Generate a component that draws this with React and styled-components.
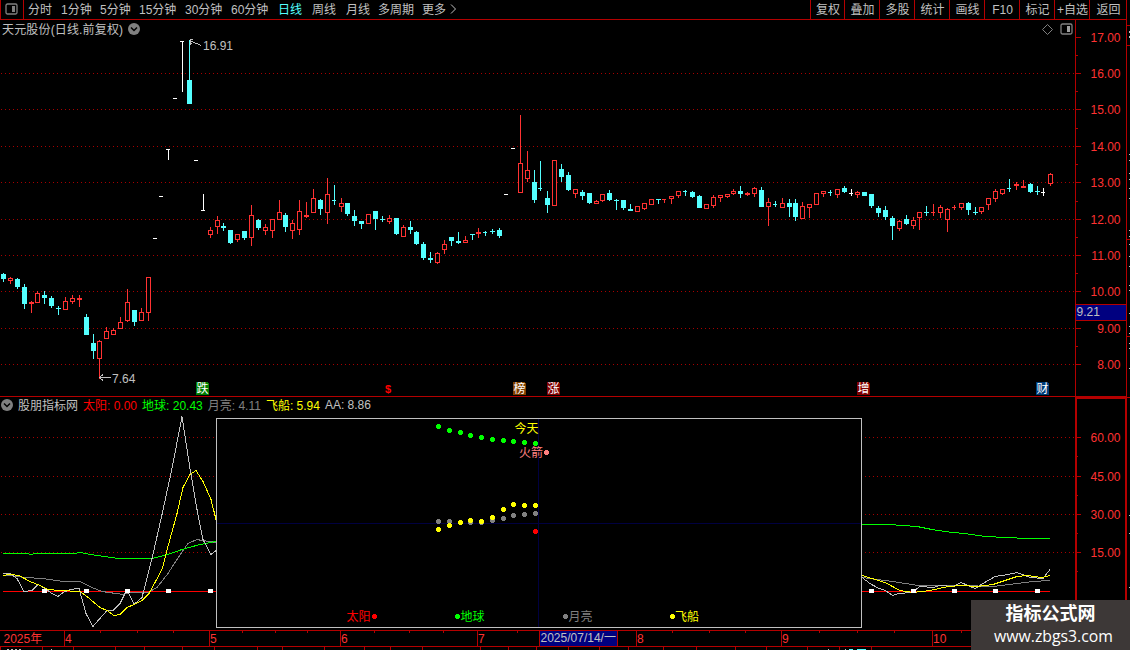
import styled, { createGlobalStyle } from "styled-components";

const periods = [
  { name: "分时", width: 33 },
  { name: "1分钟", width: 39 },
  { name: "5分钟", width: 39 },
  { name: "15分钟", width: 46 },
  { name: "30分钟", width: 46 },
  { name: "60分钟", width: 47 },
  { name: "日线", width: 34 },
  { name: "周线", width: 34 },
  { name: "月线", width: 32 },
  { name: "多周期", width: 44 },
  { name: "更多", width: 28 },
];

const tools = ["复权", "叠加", "多股", "统计", "画线", "F10", "标记", "+自选", "返回"];

// [x, high, top, bottom, low, kind]
// kind: d = down, u = up, f = up filled, c = cyan dash, r = red dash, w = white dash
const candles = [
  [3, 273, 274, 279, 282, "d"], [10, 277, 278, 281, 284, "u"], [17, 278, 279, 287, 289, "d"],
  [24, 284, 287, 304, 309, "d"], [31, 301, 302, 304, 313, "f"], [37, 291, 293, 303, 303, "u"],
  [44, 291, 295, 298, 304, "d"], [51, 296, 298, 306, 308, "d"], [58, 306, 308, 309, 315, "d"],
  [65, 297, 301, 310, 310, "u"], [72, 295, 298, 302, 304, "u"], [79, 295, 298, 300, 307, "f"],
  [86, 314, 317, 335, 335, "d"], [93, 334, 343, 351, 359, "d"], [99, 340, 341, 359, 379, "u"],
  [106, 327, 331, 339, 339, "u"], [113, 328, 330, 335, 335, "u"], [120, 317, 322, 329, 329, "u"],
  [127, 289, 302, 321, 322, "u"], [134, 310, 310, 322, 326, "d"], [141, 308, 312, 321, 321, "u"],
  [148, 277, 277, 313, 321, "u"], [155, 238, 238, 239, 239, "w"], [161, 196, 196, 197, 197, "w"],
  [168, 149, 149, 150, 160, "w"], [175, 98, 98, 99, 99, "w"], [182, 41, 41, 42, 92, "w"],
  [189, 40, 80, 104, 104, "d"], [196, 160, 160, 161, 161, "w"], [203, 194, 210, 211, 211, "w"],
  [210, 227, 230, 235, 238, "u"], [217, 216, 220, 227, 234, "u"], [223, 223, 226, 228, 231, "d"],
  [230, 230, 230, 243, 244, "d"], [237, 234, 234, 240, 242, "u"], [244, 231, 231, 238, 240, "d"],
  [251, 205, 215, 238, 246, "u"], [258, 219, 220, 228, 230, "d"], [265, 224, 227, 231, 235, "u"],
  [272, 219, 219, 231, 238, "u"], [279, 200, 212, 220, 220, "u"], [285, 213, 215, 227, 232, "d"],
  [292, 220, 223, 231, 239, "u"], [299, 200, 211, 230, 235, "u"], [306, 202, 215, 217, 218, "f"],
  [313, 189, 198, 213, 213, "u"], [320, 199, 200, 209, 215, "d"], [327, 178, 194, 213, 224, "u"],
  [334, 185, 200, 201, 205, "c"], [341, 198, 203, 207, 212, "u"], [347, 203, 203, 214, 216, "d"],
  [354, 210, 216, 221, 226, "d"], [361, 221, 221, 224, 229, "d"], [368, 214, 214, 224, 224, "u"],
  [375, 211, 211, 219, 230, "d"], [382, 216, 219, 220, 222, "d"], [389, 215, 218, 222, 224, "u"],
  [396, 218, 218, 234, 235, "d"], [403, 225, 227, 237, 237, "u"], [410, 221, 227, 230, 234, "d"],
  [416, 231, 232, 244, 245, "d"], [423, 242, 244, 258, 260, "d"], [430, 252, 258, 260, 263, "d"],
  [437, 252, 253, 263, 264, "u"], [444, 240, 244, 250, 254, "u"], [451, 237, 237, 241, 246, "d"],
  [458, 232, 241, 243, 244, "d"], [465, 236, 240, 243, 243, "u"], [472, 234, 234, 235, 240, "d"],
  [478, 228, 232, 234, 238, "f"], [485, 231, 232, 233, 236, "c"], [492, 229, 231, 232, 234, "d"],
  [499, 228, 230, 236, 238, "d"], [506, 194, 194, 195, 195, "w"], [513, 148, 148, 149, 149, "w"],
  [520, 115, 163, 193, 193, "u"], [527, 151, 170, 179, 182, "u"], [534, 170, 182, 200, 203, "d"],
  [540, 161, 188, 189, 191, "c"], [547, 191, 198, 205, 213, "d"], [554, 160, 160, 206, 206, "u"],
  [561, 164, 169, 177, 182, "d"], [568, 172, 175, 190, 191, "d"], [575, 189, 189, 194, 198, "u"],
  [582, 190, 192, 196, 200, "d"], [589, 193, 193, 203, 204, "d"], [596, 200, 201, 204, 204, "u"],
  [602, 194, 194, 201, 202, "u"], [609, 190, 193, 200, 201, "d"], [616, 199, 200, 201, 210, "d"],
  [623, 200, 200, 208, 210, "d"], [630, 204, 209, 211, 211, "d"], [637, 206, 206, 212, 212, "u"],
  [644, 203, 203, 209, 210, "u"], [651, 199, 199, 205, 205, "u"], [658, 199, 199, 200, 204, "d"],
  [664, 199, 199, 200, 203, "r"], [671, 196, 196, 199, 204, "u"], [678, 191, 191, 196, 198, "u"],
  [685, 190, 191, 192, 196, "c"], [692, 191, 192, 197, 198, "d"], [699, 195, 196, 208, 208, "d"],
  [706, 204, 204, 209, 209, "u"], [713, 195, 197, 206, 208, "u"], [720, 195, 195, 198, 202, "u"],
  [727, 194, 194, 197, 198, "u"], [733, 189, 191, 194, 195, "u"], [740, 186, 191, 194, 198, "d"],
  [747, 192, 193, 195, 196, "f"], [754, 187, 188, 194, 197, "u"], [761, 187, 190, 207, 207, "d"],
  [768, 198, 202, 207, 226, "u"], [775, 201, 204, 205, 207, "c"], [782, 198, 203, 208, 208, "u"],
  [789, 199, 203, 207, 217, "d"], [795, 199, 203, 217, 221, "d"], [802, 202, 206, 219, 219, "u"],
  [809, 204, 204, 208, 218, "u"], [816, 193, 193, 205, 205, "u"], [823, 191, 191, 194, 197, "u"],
  [830, 190, 192, 193, 196, "c"], [837, 189, 189, 195, 198, "u"], [844, 186, 188, 192, 193, "d"],
  [851, 189, 193, 194, 196, "w"], [857, 191, 192, 195, 198, "u"], [864, 192, 192, 196, 196, "d"],
  [871, 194, 194, 206, 208, "d"], [878, 206, 208, 213, 217, "d"], [885, 206, 210, 217, 220, "d"],
  [892, 216, 218, 226, 240, "d"], [899, 220, 221, 229, 231, "u"], [906, 215, 219, 224, 225, "d"],
  [913, 217, 220, 226, 229, "u"], [919, 212, 212, 218, 230, "u"], [926, 206, 212, 213, 216, "d"],
  [933, 204, 212, 213, 216, "r"], [940, 205, 207, 213, 218, "u"], [947, 208, 209, 220, 232, "u"],
  [954, 205, 207, 208, 210, "r"], [961, 203, 203, 208, 210, "u"], [968, 202, 203, 210, 215, "d"],
  [975, 207, 212, 213, 215, "d"], [981, 207, 207, 212, 214, "u"], [988, 198, 198, 205, 210, "u"],
  [995, 189, 191, 199, 202, "u"], [1002, 189, 189, 194, 195, "u"], [1009, 179, 188, 189, 192, "c"],
  [1016, 182, 184, 186, 190, "f"], [1023, 180, 186, 188, 188, "f"], [1030, 183, 184, 192, 193, "d"],
  [1037, 186, 191, 192, 195, "d"], [1043, 188, 192, 193, 196, "w"], [1050, 173, 174, 184, 186, "u"],
];

const colors = {
  d: "#54ffff",
  c: "#54ffff",
  u: "#ff3232",
  f: "#ff3232",
  r: "#ff3232",
  w: "#ffffff",
};

const priceTicks = [
  [37, "17.00"], [73, "16.00"], [109, "15.00"], [146, "14.00"], [182, "13.00"],
  [219, "12.00"], [255, "11.00"], [291, "10.00"], [328, "9.00"], [364, "8.00"],
];
const priceMinor = [55, 91, 128, 164, 201, 237, 273, 346];

const badges = [
  { x: 196, text: "跌", color: "#008000" },
  { x: 513, text: "榜", color: "#804000" },
  { x: 547, text: "涨", color: "#800000" },
  { x: 857, text: "增", color: "#800000" },
  { x: 1036, text: "财", color: "#003c78" },
];

const legend = [
  { text: "股朋指标网", color: "#c0c0c0" },
  { text: "太阳: 0.00", color: "#ff0000" },
  { text: "地球: 20.43", color: "#00ff00" },
  { text: "月亮: 4.11", color: "#808080" },
  { text: "飞船: 5.94", color: "#ffff00" },
  { text: "AA: 8.86", color: "#c0c0c0" },
];

const indicatorTicks = [[437, "60.00"], [476, "45.00"], [514, "30.00"], [552, "15.00"]];

const lines = [
  {
    color: "#808080",
    points: [
      "3,575 10,575 25,577 43,578 63,581 80,581 92,587 102,591 123,594 130,592 148,592 157,587 168,573 175,562 183,550 188,543 197,539 202,540 216,542",
      "862,577 877,579 893,581 918,585 937,585 962,585 993,586 1017,583 1033,581 1050,580",
    ],
  },
  {
    color: "#00ff00",
    points: [
      "3,553 27,553 31,554 36,553 74,553 81,552 90,554 98,555 118,558 152,558 160,556 168,554 182,549 200,544 216,541",
      "862,524 889,524 917,526 932,529 952,532 965,533 985,536 1007,537 1027,538 1050,538",
    ],
  },
  {
    color: "#c0c0c0",
    points: [
      "3,573 10,573 17,578 24,591 32,590 38,584 45,588 52,593 58,596 63,592 70,589 79,588 86,613 93,626 99,619 107,610 113,610 120,603 127,589 134,604 142,597 152,558 162,514 172,468 182,416 190,468 197,509 203,539 211,554 216,550",
      "862,577 870,583 877,587 885,590 893,595 898,593 912,592 920,586 933,587 940,585 953,586 961,582 975,588 983,583 995,576 1008,574 1017,572 1030,577 1043,578 1050,569",
    ],
  },
  {
    color: "#ffff00",
    points: [
      "3,575 10,574 19,575 30,581 40,585 48,589 60,590 80,591 87,596 100,607 107,610 114,615 120,614 127,607 134,604 142,600 149,593 162,569 168,546 177,513 183,487 190,474 196,470 203,481 211,499 216,519",
      "862,575 872,578 885,582 900,590 913,592 930,590 948,586 963,585 977,586 993,584 1005,580 1017,576 1027,575 1042,577 1050,575",
    ],
  },
];

const markers = [42, 84, 125, 166, 208, 869, 911, 952, 993, 1035];

const dots = [
  {
    color: "#00ff00",
    points: [[438, 426], [449, 430], [460, 432], [470, 435], [481, 437], [492, 439], [503, 440], [513, 441], [524, 442], [535, 443], [457, 616]],
  },
  {
    color: "#808080",
    points: [[438, 521], [449, 521], [460, 522], [470, 522], [481, 522], [492, 520], [503, 518], [513, 515], [524, 514], [535, 513], [565, 616]],
  },
  {
    color: "#ffff00",
    points: [[438, 529], [449, 525], [460, 522], [470, 520], [481, 521], [492, 517], [503, 509], [513, 504], [524, 505], [535, 505], [672, 616]],
  },
  { color: "#ff0000", points: [[535, 531], [374, 616]] },
  { color: "#ff8080", points: [[546, 452]] },
];

const boxLabels = [
  { x: 514.5, y: 433, text: "今天", color: "#ffff00" },
  { x: 519, y: 457, text: "火箭", color: "#ff8080" },
  { x: 346.5, y: 621, text: "太阳", color: "#ff0000" },
  { x: 460.5, y: 621, text: "地球", color: "#00ff00" },
  { x: 568.5, y: 621, text: "月亮", color: "#808080" },
  { x: 675, y: 621, text: "飞船", color: "#ffff00" },
];

const months = [[64, "4"], [209, "5"], [340, "6"], [477, "7"], [636, "8"], [781, "9"], [932, "10"]];
const weekTicks = [100, 137, 173, 242, 275, 307, 374, 409, 443, 517, 672, 709, 745, 819, 857, 894, 961];
const tabTicks = [0, 42, 73, 115, 144, 182, 214, 257, 282, 324, 364, 390, 422, 480, 508, 536, 568, 599, 628, 663, 696, 735, 766, 807, 839, 871];

const Candle = ({ data }) => {
  const [x, high, top, bottom, low, kind] = data;
  const fill = colors[kind];
  const thin = kind === "c" || kind === "r" || kind === "w";
  return (
    <g fill={fill}>
      <rect x={x} y={high} width={1} height={low - high} />
      <rect x={x - 2} y={top} width={thin ? 4 : 5} height={bottom - top} />
      {kind === "u" && <rect x={x - 1} y={top + 1} width={3} height={bottom - top - 2} fill="#000" />}
    </g>
  );
};

const GridLine = ({ y, end = 1074 }) => (
  <line x1={1} x2={end} y1={y + 0.5} y2={y + 0.5} stroke="#a80000" strokeDasharray="1 3" />
);

const Dropdown = () => (
  <svg width="12" height="12" viewBox="0 0 12 12">
    <circle cx="6" cy="6" r="6" fill="#808080" />
    <path d="M3 4.5L6 7.5L9 4.5" fill="none" stroke="#000" strokeWidth="1.5" />
  </svg>
);

const PriceChart = () => (
  <Chart width="1075" height="358" viewBox="0 38 1075 358">
    {priceTicks.slice(1).map(([y]) => (
      <GridLine key={y} y={y} />
    ))}
    {candles.map((data) => (
      <Candle key={data[0]} data={data} />
    ))}
    <path d="M190 41.5H192L201 45.5M190.5 40V45M190 39.5H193M191 43.5H192" stroke="#c0c0c0" fill="none" />
    <text x="203" y="50" fill="#c0c0c0">16.91</text>
    <path d="M99 377.5H111M103 374.5L99.5 377.5L103 380.5" stroke="#c0c0c0" fill="none" />
    <text x="112" y="383" fill="#c0c0c0">7.64</text>
    {badges.map((badge) => (
      <g key={badge.x}>
        <path d={`M${badge.x} 382h11l2 2v11h-13z`} fill={badge.color} />
        <text x={badge.x + 0.5} y="393" fill="#fff">{badge.text}</text>
      </g>
    ))}
    <text x="385" y="393" fill="#ff0000" fontSize="11" fontWeight="bold">$</text>
  </Chart>
);

const PriceAxis = () => (
  <Chart width="52" height="376" viewBox="1075 20 52 376">
    <path d="M1075.5 20V396M1126.5 20V396" stroke="#b40000" />
    {priceMinor.map((y) => (
      <rect key={y} x="1076" y={y} width="2" height="1" fill="#b40000" />
    ))}
    {priceTicks.map(([y, label]) => (
      <g key={y}>
        <rect x="1076" y={y} width="5" height="1" fill="#b40000" />
        <text x="1120.5" y={y + 5} fill="#ff3232" textAnchor="end">{label}</text>
      </g>
    ))}
    <rect x="1076" y="304" width="50" height="17" fill="#000080" />
    <path d="M1076 304.5H1126M1076 320.5H1126" stroke="#b40000" />
    <text x="1076.5" y="316" fill="#c0c0c0">9.21</text>
  </Chart>
);

const IndicatorChart = () => (
  <Chart width="1075" height="216" viewBox="0 414 1075 216">
    {indicatorTicks.map(([y]) => (
      <GridLine key={y} y={y} />
    ))}
    <path d="M3 591.5H1050" stroke="#ff0000" />
    {lines.map((line) =>
      line.points.map((points) => (
        <polyline key={points} points={points} transform="translate(0 .5)" fill="none" stroke={line.color} />
      ))
    )}
    {markers.map((x) => (
      <rect key={x} x={x} y="589" width="5" height="4" fill="#fff" />
    ))}
    <rect x="216.5" y="418.5" width="645" height="209" fill="#000" stroke="#c0c0c0" />
    <path d="M217 523.5H861M538.5 419V627" stroke="#000040" />
    {dots.map((group) =>
      group.points.map(([x, y]) => (
        <circle key={`${x}-${y}`} cx={x + 0.5} cy={y + 0.5} r="2.6" fill={group.color} />
      ))
    )}
    {boxLabels.map((label) => (
      <text key={label.x} x={label.x} y={label.y} fill={label.color}>{label.text}</text>
    ))}
  </Chart>
);

const IndicatorAxis = () => (
  <Chart width="52" height="233" viewBox="1075 397 52 233">
    <rect x="1076" y="398" width="50" height="240" fill="none" stroke="#b40000" strokeWidth="2" />
    {[456, 495, 533, 571].map((y) => (
      <rect key={y} x="1077" y={y} width="1" height="1" fill="#b40000" />
    ))}
    {indicatorTicks.map(([y, label]) => (
      <g key={y}>
        <rect x="1076" y={y} width="5" height="1" fill="#b40000" />
        <text x="1120.5" y={y + 5} fill="#ff3232" textAnchor="end">{label}</text>
      </g>
    ))}
  </Chart>
);

const DateAxis = () => (
  <Chart width="1127" height="20" viewBox="0 630 1127 20">
    <path d="M0 630.5H1127M0 646.5H1127" stroke="#b40000" />
    {weekTicks.map((x) => (
      <rect key={x} x={x} y="631" width="1" height="2" fill="#b40000" />
    ))}
    {tabTicks.map((x) => (
      <rect key={x} x={x} y="647" width="1" height="3" fill="#b40000" />
    ))}
    <text x="3.5" y="643" fill="#ff3232">2025年</text>
    {months.map(([x, label]) => (
      <g key={x}>
        <rect x={x} y="631" width="1" height="15" fill="#b40000" />
        <text x={x + 1} y="643" fill="#ff3232">{label}</text>
      </g>
    ))}
    <rect x="540" y="631" width="77" height="15" fill="#000080" />
    <path d="M539.5 631V646M617.5 631V646" stroke="#b40000" />
    <text x="540.5" y="642" fill="#c0c0c0">2025/07/14/一</text>
    <path d="M7 649.5H9M11 649.5H13M15 649.5H17M19 649.5H21M51 649.5H52M828 649.5H829M845 649.5H846" stroke="#c0c0c0" />
    <path d="M849 649.5H853M857 649.5H866" stroke="#54ffff" />
  </Chart>
);

const SideStrip = () => (
  <Chart width="3" height="650" viewBox="1127 0 3 650">
    <path d="M1127 25.5H1130M1127 45.5H1130M1127 239.5H1130M1127 336.5H1130M1127 397.5H1130" stroke="#b40000" />
    <path
      d="M1129.5 31V33M1129.5 36V38M1129.5 154V155M1129.5 160V161M1129.5 173V174M1129.5 179V180M1129.5 188V189M1129.5 198V199M1129.5 230V231M1129.5 236V237M1129.5 244V245M1129.5 256V257M1129.5 266V267M1129.5 285V286M1129.5 290V291M1129.5 313V314M1129.5 326V327M1129.5 333V334M1129.5 343V344M1129.5 348V349M1129.5 368V369M1129.5 515V516M1129.5 533V534M1129.5 587V588"
      stroke="#c0c0c0"
    />
  </Chart>
);

const App = () => {
  return (
    <Page>
      <GlobalStyle />
      <Terminal>
        <Toolbar>
          <LayoutButton>
            <svg width="13" height="12" viewBox="0 0 13 12">
              <rect x="1" y="1" width="11" height="10" rx="1.5" fill="none" stroke="#808080" strokeWidth="1.3" />
              <rect x="7" y="3" width="3" height="6" fill="#808080" />
            </svg>
          </LayoutButton>
          {periods.map((period) => (
            <Period key={period.name} $width={period.width} $active={period.name === "日线"}>
              {period.name}
            </Period>
          ))}
          <svg width="7" height="18" viewBox="0 0 7 18">
            <path d="M1 4.5L5.5 9L1 13.5" fill="none" stroke="#c0c0c0" />
          </svg>
          <Tools>
            {tools.map((tool) => (
              <Tool key={tool} $first={tool === "复权"} $last={tool === "返回"}>{tool}</Tool>
            ))}
          </Tools>
        </Toolbar>
        <PricePanel>
          <div>
            <Title>
              <TitleText>天元股份(日线.前复权)</TitleText>
              <Dropdown />
              <TitleIcons>
                <svg width="11" height="11" viewBox="0 0 11 11">
                  <path d="M5.5 .5L10.5 5.5L5.5 10.5L.5 5.5Z" fill="none" stroke="#808080" />
                </svg>
                <svg width="13" height="12" viewBox="0 0 13 12">
                  <rect x="1" y="1" width="11" height="10" rx="1.5" fill="none" stroke="#808080" strokeWidth="1.3" />
                  <rect x="7" y="3" width="3" height="6" fill="#a0a0a0" />
                </svg>
              </TitleIcons>
            </Title>
            <PriceChart />
          </div>
          <PriceAxis />
        </PricePanel>
        <IndicatorPanel>
          <div>
            <Legend>
              <Dropdown />
              {legend.map((item) => (
                <LegendItem key={item.text} $color={item.color}>{item.text}</LegendItem>
              ))}
            </Legend>
            <IndicatorChart />
          </div>
          <IndicatorAxis />
        </IndicatorPanel>
        <DateAxis />
      </Terminal>
      <SideStrip />
      <Watermark>
        <SiteName>指标公式网</SiteName>
        <SiteUrl>www.zbgs3.com</SiteUrl>
      </Watermark>
    </Page>
  );
};

const GlobalStyle = createGlobalStyle`
  body {
    margin: 0;
    background: #000;
    overflow: hidden;
  }
`;

const Page = styled.div`
  position: relative;
  display: flex;
  width: 1130px;
  height: 650px;
  overflow: hidden;
  background: #000;
  color: #c0c0c0;
  font-family: "Liberation Sans", "Noto Sans CJK SC", sans-serif;
  font-size: 12px;
  white-space: pre;
`;

const Terminal = styled.div`
  display: grid;
  grid-template-rows: 20px 377px 233px 20px;
  width: 1127px;
`;

const Chart = styled.svg`
  display: block;
  shape-rendering: crispEdges;
`;

const Toolbar = styled.div`
  display: flex;
  box-sizing: border-box;
  height: 20px;
  border: 1px solid #b40000;
  border-top: none;
  line-height: 20px;
`;

const LayoutButton = styled.div`
  display: flex;
  align-items: center;
  justify-content: center;
  box-sizing: border-box;
  width: 23px;
  height: 19px;
  margin-right: 4px;
  padding: 0 2px 2px 0;
  border-right: 1px solid #b40000;
`;

const Period = styled.div`
  width: ${(props) => props.$width}px;
  color: ${(props) => (props.$active ? "#54ffff" : "#c0c0c0")};
`;

const Tools = styled.div`
  display: flex;
  margin-left: auto;
`;

const Tool = styled.div`
  box-sizing: border-box;
  width: ${(props) => (props.$last ? 37 : props.$first ? 34 : 35)}px;
  height: 19px;
  padding-left: 1px;
  border-left: 1px solid #b40000;
  text-align: center;
`;

const PricePanel = styled.div`
  display: grid;
  grid-template-columns: 1075px 52px;
  border-bottom: 1px solid #b40000;
`;

const Title = styled.div`
  display: flex;
  align-items: center;
  gap: 5px;
  box-sizing: border-box;
  height: 18px;
  padding-left: 2px;
`;

const TitleText = styled.span`
  margin-top: -2px;
  letter-spacing: 0.16px;
`;

const TitleIcons = styled.div`
  display: flex;
  align-items: center;
  gap: 7px;
  margin-left: auto;
  padding-right: 2px;
`;

const IndicatorPanel = styled.div`
  display: grid;
  grid-template-columns: 1075px 52px;
`;

const Legend = styled.div`
  display: flex;
  align-items: center;
  gap: 5px;
  box-sizing: border-box;
  height: 17px;
  padding: 0 0 2px 1px;
`;

const LegendItem = styled.span`
  color: ${(props) => props.$color};
`;

const Watermark = styled.div`
  position: absolute;
  right: 0;
  bottom: 0;
  width: 159px;
  height: 50px;
  background: #3d3837;
  color: #fff;
  text-align: center;
`;

const SiteName = styled.div`
  height: 26px;
  font-size: 18px;
  font-weight: bold;
  line-height: 28px;
`;

const SiteUrl = styled.div`
  padding-left: 6px;
  font-family: "Open Sans", sans-serif;
  font-size: 15.8px;
  line-height: 20px;
`;

export default App;
